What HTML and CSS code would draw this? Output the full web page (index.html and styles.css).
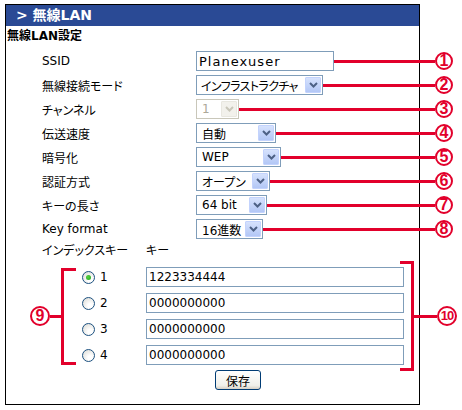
FILE: index.html
```html
<!DOCTYPE html>
<html lang="ja">
<head>
<meta charset="UTF-8">
<title>無線LAN</title>
<link rel="stylesheet" href="styles.css">
</head>
<body>
<div class="panel">
  <div class="panel-head">&gt; 無線LAN</div>
  <div class="section-title">無線LAN設定</div>

  <div class="fields">
    <div class="row">
      <span class="label">SSID</span>
      <input type="text" class="text ssid" value="Planexuser">
      <span class="lead"></span>
      <span class="badge">1</span>
    </div>
    <div class="row row-mode">
      <span class="label">無線接続モード</span>
      <div class="select w-mode"><span class="val">インフラストラクチャ</span><span class="drop"><svg width="9" height="6" viewBox="0 0 9 6"><path d="M1 1l3.5 3.5L8 1" fill="none" stroke-width="2"/></svg></span></div>
      <span class="lead"></span>
      <span class="badge">2</span>
    </div>
    <div class="row">
      <span class="label">チャンネル</span>
      <div class="select w-channel disabled"><span class="val">1</span><span class="drop"><svg width="9" height="6" viewBox="0 0 9 6"><path d="M1 1l3.5 3.5L8 1" fill="none" stroke-width="2"/></svg></span></div>
      <span class="lead"></span>
      <span class="badge">3</span>
    </div>
    <div class="row">
      <span class="label">伝送速度</span>
      <div class="select w-speed"><span class="val">自動</span><span class="drop"><svg width="9" height="6" viewBox="0 0 9 6"><path d="M1 1l3.5 3.5L8 1" fill="none" stroke-width="2"/></svg></span></div>
      <span class="lead"></span>
      <span class="badge">4</span>
    </div>
    <div class="row">
      <span class="label">暗号化</span>
      <div class="select w-enc"><span class="val">WEP</span><span class="drop"><svg width="9" height="6" viewBox="0 0 9 6"><path d="M1 1l3.5 3.5L8 1" fill="none" stroke-width="2"/></svg></span></div>
      <span class="lead"></span>
      <span class="badge">5</span>
    </div>
    <div class="row row-auth">
      <span class="label">認証方式</span>
      <div class="select w-auth"><span class="val">オープン</span><span class="drop"><svg width="9" height="6" viewBox="0 0 9 6"><path d="M1 1l3.5 3.5L8 1" fill="none" stroke-width="2"/></svg></span></div>
      <span class="lead"></span>
      <span class="badge">6</span>
    </div>
    <div class="row">
      <span class="label">キーの長さ</span>
      <div class="select w-len"><span class="val">64 bit</span><span class="drop"><svg width="9" height="6" viewBox="0 0 9 6"><path d="M1 1l3.5 3.5L8 1" fill="none" stroke-width="2"/></svg></span></div>
      <span class="lead"></span>
      <span class="badge">7</span>
    </div>
    <div class="row">
      <span class="label">Key format</span>
      <div class="select w-format"><span class="val">16進数</span><span class="drop"><svg width="9" height="6" viewBox="0 0 9 6"><path d="M1 1l3.5 3.5L8 1" fill="none" stroke-width="2"/></svg></span></div>
      <span class="lead"></span>
      <span class="badge">8</span>
    </div>
  </div>

  <div class="index-head">
    <span class="index-label">インデックスキー</span>
    <span>キー</span>
  </div>

  <div class="keys">
    <span class="badge badge-wide">9</span>
    <span class="tick tick-left"></span>
    <span class="bracket bracket-left"></span>
    <div class="key-list">
      <div class="key-row">
        <span class="radio checked"></span><span class="key-num">1</span>
        <input type="text" class="text key" value="1223334444">
      </div>
      <div class="key-row">
        <span class="radio"></span><span class="key-num">2</span>
        <input type="text" class="text key" value="0000000000">
      </div>
      <div class="key-row">
        <span class="radio"></span><span class="key-num">3</span>
        <input type="text" class="text key" value="0000000000">
      </div>
      <div class="key-row">
        <span class="radio"></span><span class="key-num">4</span>
        <input type="text" class="text key" value="0000000000">
      </div>
    </div>
    <span class="bracket bracket-right"></span>
    <span class="tick tick-right"></span>
    <span class="badge badge-wide badge-10">10</span>
  </div>

  <div class="save-row">
    <button class="save">保存</button>
  </div>
</div>
</body>
</html>
```

FILE: styles.css
```css
body {
  margin: 0;
  background-color: white;
  font-family: "DejaVu Sans", "Noto Sans CJK JP", sans-serif;
  font-size: 12px;
  color: black;
}

.panel {
  margin: 4px 0 0 5px;
  width: 413px;
  height: 399px;
  border: 1px solid black;
}

.panel-head {
  height: 21px;
  line-height: 21px;
  padding-left: 10px;
  background-color: #2a4a95;
  color: white;
  font-size: 14px;
  font-weight: bold;
}

.section-title {
  margin-top: 2px;
  padding-left: 1px;
  line-height: 16px;
  font-weight: bold;
}

.fields {
  margin-top: 7px;
}

.row {
  display: flex;
  align-items: center;
  height: 20px;
  margin: 0 -34px 4px 0;
  padding-left: 36px;
}

.row-mode {
  margin-top: 1px;
}

.row-auth {
  margin-top: 2px;
}

.label {
  flex: none;
  width: 154px;
  font-feature-settings: "palt";
}

.lead {
  flex: 1;
  height: 3px;
  background-color: #e2002b;
}

.badge {
  flex: none;
  box-sizing: border-box;
  width: 18px;
  height: 18px;
  border: 2px solid #e2002b;
  border-radius: 50%;
  background-color: white;
  color: #e2002b;
  font-family: "Liberation Sans", sans-serif;
  font-size: 16px;
  font-weight: bold;
  line-height: 14px;
  text-align: center;
}

.badge-wide {
  width: 20px;
  height: 20px;
  line-height: 16px;
}

.badge-10 {
  font-size: 13px;
  letter-spacing: -1px;
}

.text {
  box-sizing: border-box;
  height: 20px;
  margin: 0;
  padding: 0 2px;
  border: 1px solid #7f9db9;
  font: inherit;
  color: black;
  background-color: white;
}

.ssid {
  width: 138px;
  font-size: 13px;
  letter-spacing: 1px;
}

.select {
  flex: none;
  box-sizing: border-box;
  display: flex;
  align-items: center;
  height: 20px;
  padding: 1px;
  border: 1px solid #7f9db9;
  background-color: white;
}

.select .val {
  flex: 1;
  padding-left: 4px;
  white-space: nowrap;
  overflow: hidden;
  font-feature-settings: "palt";
}

.w-mode .val {
  padding-left: 3px;
  letter-spacing: -0.6px;
}

.select .drop {
  flex: none;
  box-sizing: border-box;
  display: flex;
  align-items: center;
  justify-content: center;
  width: 16px;
  height: 16px;
  border: 1px solid #c3d3fd;
  border-radius: 1px;
  background: linear-gradient(#d6e2fd, #b3c7f6);
}

.select .drop path {
  stroke: #4d6185;
}

.select.disabled {
  border-color: #c9c7ba;
}

.select.disabled .val {
  color: #aca899;
}

.select.disabled .drop {
  border-color: #e8e7e0;
  background: #f2f1ec;
}

.select.disabled .drop path {
  stroke: #c9c7ba;
}

.w-mode { width: 127px; }
.w-channel { width: 43px; }
.w-speed { width: 80px; }
.w-enc { width: 85px; }
.w-auth { width: 74px; }
.w-len { width: 71px; }
.w-format { width: 67px; }

.index-head {
  display: flex;
  margin-top: 1px;
  padding-left: 36px;
  line-height: 16px;
  font-feature-settings: "palt";
}

.index-label {
  width: 104px;
}

.keys {
  display: flex;
  align-items: center;
  margin: 8px -38px 0 0;
  padding-left: 24px;
}

.tick {
  flex: none;
  height: 3px;
  background-color: #e2002b;
}

.tick-left {
  width: 11px;
}

.tick-right {
  width: 23px;
}

.bracket {
  flex: none;
  box-sizing: border-box;
  border: 3px solid #e2002b;
}

.bracket-left {
  width: 15px;
  height: 97px;
  margin-right: 6px;
  border-right: none;
}

.bracket-right {
  width: 14px;
  height: 110px;
  margin: -6px 0 -6px -4px;
  border-left: none;
}

.key-list {
  flex: none;
  display: flex;
  flex-direction: column;
  gap: 6px;
  width: 322px;
}

.key-row {
  display: flex;
  align-items: center;
  height: 20px;
}

.radio {
  position: relative;
  flex: none;
  box-sizing: border-box;
  width: 13px;
  height: 13px;
  margin-right: 5px;
  border: 1px solid #1c5180;
  border-radius: 50%;
  background: radial-gradient(circle at 65% 70%, #ffffff 20%, #dcdcd7 90%);
}

.radio.checked::after {
  content: "";
  position: absolute;
  left: 3px;
  top: 3px;
  width: 5px;
  height: 5px;
  border-radius: 50%;
  background: radial-gradient(circle at 40% 40%, #55d43f, #21a121);
}

.key-num {
  width: 46px;
}

.key {
  width: 258px;
}

.save-row {
  margin-top: 5px;
  padding-left: 209px;
}

.save {
  box-sizing: border-box;
  width: 46px;
  height: 20px;
  padding: 0;
  border: 1px solid #003c74;
  border-radius: 3px;
  background: linear-gradient(#ffffff, #f0f0ea 80%, #d6d0c5);
  font: inherit;
  color: black;
}
```
